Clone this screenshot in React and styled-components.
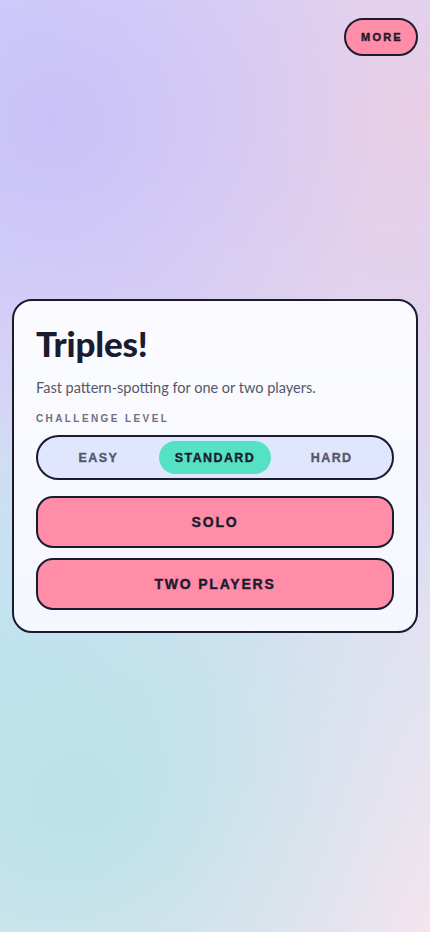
import React, { useState } from 'react';
import styled, { createGlobalStyle } from 'styled-components';

const GlobalStyle = createGlobalStyle`
  html, body {
    margin: 0;
    padding: 0;
    height: 100%;
  }
  body {
    font-family: "Lato", "Noto Sans", sans-serif;
    color: #1b1b2f;
  }
  #root {
    min-height: 100%;
  }
  * { box-sizing: border-box; }
`;

const Page = styled.div`
  position: relative;
  width: 100%;
  min-height: 100vh;
  display: flex;
  align-items: center;
  justify-content: center;
  padding: 0 12px;
  background:
    radial-gradient(circle at 12% 13%, rgba(200, 192, 248, 0.95) 0%, rgba(200, 192, 248, 0) 38%),
    radial-gradient(circle at 95% 12%, rgba(234, 206, 228, 0.9) 0%, rgba(234, 206, 228, 0) 45%),
    radial-gradient(circle at 18% 86%, rgba(188, 226, 232, 1) 0%, rgba(188, 226, 232, 0) 45%),
    radial-gradient(circle at 0% 70%, rgba(196, 228, 246, 0.9) 0%, rgba(196, 228, 246, 0) 40%),
    radial-gradient(circle at 100% 100%, rgba(248, 228, 240, 1) 0%, rgba(248, 228, 240, 0) 45%),
    linear-gradient(180deg, #d6d6fc 0%, #dcd7f3 45%, #d6e2f2 75%, #e2e6ee 100%);
`;

const MoreButton = styled.button`
  position: absolute;
  top: 18px;
  right: 12px;
  width: 74px;
  height: 38px;
  border: 2px solid #1b1b2f;
  border-radius: 999px;
  background: #ff8da8;
  color: #1b1b2f;
  font-family: "Liberation Sans", Arial, sans-serif;
  font-weight: 700;
  font-size: 11px;
  letter-spacing: 2.2px;
  -webkit-text-stroke: 0.4px #1b1b2f;
  padding: 0 0 0 2px;
  cursor: pointer;
`;

const Card = styled.div`
  width: 100%;
  border: 2px solid #1b1b2f;
  border-radius: 20px;
  background: linear-gradient(180deg, #fbfbff 0%, #f5f7fe 100%);
  padding: 21px 22px 21px 22px;
  display: flex;
  flex-direction: column;
`;

const Title = styled.h1`
  margin: 0;
  font-family: "Lato", "Noto Sans", sans-serif;
  font-weight: 900;
  font-size: 35px;
  line-height: 42px;
  color: #1b1b2f;
  letter-spacing: -0.2px;
`;

const Tagline = styled.p`
  margin: 15px 0 0;
  font-size: 14.5px;
  line-height: 18px;
  color: #55576a;
`;

const Label = styled.div`
  margin-top: 16px;
  font-family: "Liberation Sans", Arial, sans-serif;
  font-weight: 700;
  font-size: 10px;
  letter-spacing: 2.4px;
  color: #6f7080;
`;

const Segmented = styled.div`
  margin-top: 11px;
  height: 45px;
  border: 2px solid #1b1b2f;
  border-radius: 999px;
  background: #dfe6fd;
  padding: 4px;
  display: grid;
  grid-template-columns: repeat(3, 1fr);
  gap: 4px;
`;

const Segment = styled.button`
  border: none;
  border-radius: 999px;
  background: ${p => (p.$active ? '#55e2c4' : 'transparent')};
  color: ${p => (p.$active ? '#1b1b2f' : '#55566a')};
  -webkit-text-stroke: 0.35px ${p => (p.$active ? '#1b1b2f' : '#55566a')};
  font-family: "Liberation Sans", Arial, sans-serif;
  font-weight: 700;
  font-size: 12.5px;
  letter-spacing: 1.4px;
  cursor: pointer;
  padding: 0;
`;

const Actions = styled.div`
  margin-top: 16px;
  display: flex;
  flex-direction: column;
  gap: 10px;
`;

const ModeButton = styled.button`
  height: 52px;
  border: 2px solid #1b1b2f;
  border-radius: 17px;
  background: #ff8da8;
  color: #1b1b2f;
  font-family: "Liberation Sans", Arial, sans-serif;
  font-weight: 700;
  font-size: 14px;
  letter-spacing: 1.8px;
  -webkit-text-stroke: 0.4px #1b1b2f;
  cursor: pointer;
`;

const levels = ['EASY', 'STANDARD', 'HARD'];

export default function App() {
  const [level, setLevel] = useState('STANDARD');

  return (
    <>
      <GlobalStyle />
      <Page>
        <MoreButton>MORE</MoreButton>
        <Card>
          <Title>Triples!</Title>
          <Tagline>Fast pattern-spotting for one or two players.</Tagline>
          <Label>CHALLENGE LEVEL</Label>
          <Segmented>
            {levels.map(l => (
              <Segment key={l} $active={level === l} onClick={() => setLevel(l)}>
                {l}
              </Segment>
            ))}
          </Segmented>
          <Actions>
            <ModeButton>SOLO</ModeButton>
            <ModeButton>TWO PLAYERS</ModeButton>
          </Actions>
        </Card>
      </Page>
    </>
  );
}
